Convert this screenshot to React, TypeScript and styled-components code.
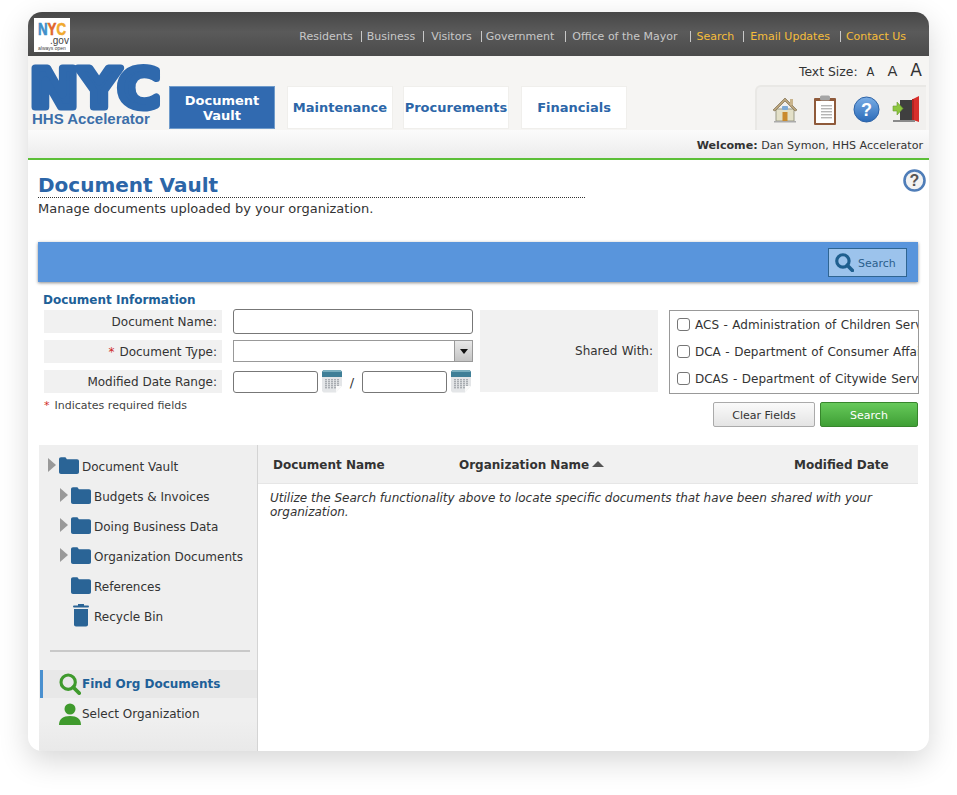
import { styled, createGlobalStyle } from 'styled-components';

const GlobalStyle = createGlobalStyle`
  html, body {
    margin: 0;
    padding: 0;
    background: #fff;
  }
  * {
    box-sizing: border-box;
  }
`;

const Frame = styled.div`
  display: flex;
  flex-direction: column;
  width: 901px;
  height: 739px;
  margin: 12px 28px 44px;
  border-radius: 14px;
  overflow: hidden;
  background: #fff;
  box-shadow: 0 10px 30px rgba(0, 0, 0, 0.16);
  font-family: 'DejaVu Sans', Verdana, sans-serif;
  font-size: 12px;
  color: #333;
`;

const TopBar = styled.header`
  display: flex;
  align-items: center;
  justify-content: space-between;
  height: 44px;
  padding: 6px 23px 4px 6px;
  background: linear-gradient(#474747, #5a5a5a 45%, #4b4b4b);
  flex-shrink: 0;
`;

const GovLogo = styled.div`
  width: 36px;
  height: 34px;
  background: #fff;
`;

const TopLinks = styled.nav`
  display: flex;
  align-items: center;
  padding-top: 2px;
  font-size: 11px;
`;

const TopLink = styled.a<{ $accent?: boolean; $before?: number; $after?: number }>`
  color: ${({ $accent }) => ($accent ? '#f5bd3b' : '#c8c8c8')};
  white-space: nowrap;
  margin-left: ${({ $before }) => $before ?? 0}px;
  padding-left: ${({ $after }) => $after ?? 0}px;
  border-left: ${({ $before }) => ($before ? '1px solid #c8c8c8' : 'none')};
  line-height: 11px;
`;

const Masthead = styled.div`
  display: flex;
  height: 74px;
  background: #f6f5f3;
  flex-shrink: 0;
`;

const BrandLogo = styled.div`
  display: flex;
  flex-direction: column;
  width: 141px;
  flex-shrink: 0;
  padding: 7px 0 0 4px;

  svg {
    overflow: visible;
  }
`;

const BrandName = styled.span`
  font-family: 'Liberation Sans', Arial, sans-serif;
  font-size: 15px;
  line-height: 15px;
  font-weight: 700;
  color: #3b6ea8;
  white-space: nowrap;
`;

const Tab = styled.a<{ $active?: boolean; $left?: number }>`
  display: flex;
  align-items: center;
  justify-content: center;
  width: 106px;
  height: 43px;
  margin: 30px 0 0 ${({ $left }) => $left ?? 0}px;
  background: ${({ $active }) => ($active ? '#316ab0' : '#fff')};
  border: 1px solid ${({ $active }) => ($active ? '#6f9bcb' : '#f0efec')};
  color: ${({ $active }) => ($active ? '#fff' : '#2c66a8')};
  font-size: 13px;
  font-weight: 700;
  line-height: 15px;
  text-align: center;
`;

const MastRight = styled.div`
  display: flex;
  flex-direction: column;
  align-items: flex-end;
  margin-left: auto;
  width: 180px;
`;

const TextSize = styled.div`
  display: flex;
  align-items: baseline;
  height: 29px;
  padding: 7px 7px 0 0;
  color: #333;
  font-size: 12.400px;
  line-height: 15px;
  white-space: nowrap;
`;

const SizeA = styled.span<{ $size: number; $left: number }>`
  font-size: ${({ $size }) => $size}px;
  margin-left: ${({ $left }) => $left}px;
`;

const ToolBox = styled.div`
  display: flex;
  align-items: flex-start;
  width: 171px;
  height: 45px;
  margin-right: 3px;
  padding: 8px 0 0 15px;
  border: 2px solid #e9e8e5;
  border-width: 2px 0 0 2px;
  border-top-left-radius: 6px;
  background: #f1f0ee;
`;

const ToolIcon = styled.svg<{ $left?: number; $top?: number }>`
  flex-shrink: 0;
  margin-left: ${({ $left }) => $left ?? 0}px;
  margin-top: ${({ $top }) => $top ?? 0}px;
`;

const WelcomeBar = styled.div`
  display: flex;
  align-items: center;
  justify-content: flex-end;
  height: 30px;
  padding: 2px 6px 0 0;
  background: linear-gradient(#fbfbfb, #ececec);
  border-bottom: 2px solid #5cbf38;
  font-size: 11.100px;
  color: #333;
  flex-shrink: 0;
`;

const Main = styled.main`
  display: flex;
  flex-direction: column;
  flex: 1;
  min-height: 0;
  padding: 0 10px;
`;

const TitleRow = styled.div`
  display: flex;
  justify-content: space-between;
  height: 82px;
  padding-top: 12px;
`;

const TitleBlock = styled.div`
  width: 547px;
`;

const Title = styled.h1`
  margin: 0;
  height: 26px;
  font-size: 20px;
  line-height: 26px;
  font-weight: 700;
  color: #2c66a8;
  border-bottom: 1px dotted #333;
`;

const Subtitle = styled.p`
  margin: 3px 0 0;
  font-size: 13px;
  line-height: 16px;
  color: #333;
`;

const HelpButton = styled.svg`
  margin: -3px -7px 0 0;
`;

const ActionBar = styled.div`
  display: flex;
  align-items: center;
  justify-content: flex-end;
  width: 880px;
  height: 40px;
  padding-right: 11px;
  background: #5995dc;
  box-shadow: 0 1px 3px rgba(0, 0, 0, 0.45);
  flex-shrink: 0;
`;

const BarSearch = styled.a`
  display: flex;
  align-items: center;
  gap: 3px;
  width: 79px;
  height: 29px;
  padding-left: 6px;
  background: #9cc3ec;
  border: 1px solid #2f6592;
  font-size: 11px;
  color: #2b5f8c;

  span {
    padding-top: 2px;
  }
`;

const SectionTitle = styled.h2`
  margin: 11px 0 3px 5px;
  font-size: 12px;
  line-height: 14px;
  font-weight: 700;
  color: #206098;
`;

const FormGrid = styled.div`
  display: grid;
  grid-template-columns: 436px 178px 261px;
  margin-left: 6px;
`;

const FormRows = styled.div`
  display: grid;
  grid-template-columns: 178px 240px;
  grid-auto-rows: 23px;
  column-gap: 11px;
  row-gap: 7px;
`;

const Label = styled.label`
  display: flex;
  align-items: center;
  justify-content: flex-end;
  padding-right: 5px;
  background: #f1f1f1;
  color: #333;
  font-size: 12px;
  white-space: nowrap;
`;

const Req = styled.span`
  color: #cf2a27;
  margin-right: 5px;
`;

const TextBox = styled.input`
  display: block;
  width: 100%;
  height: 25px;
  margin-top: -1px;
  padding: 0 4px;
  background: #fff;
  border: 1px solid #777;
  border-radius: 3px;
`;

const TypeSelect = styled.div`
  display: flex;
  justify-content: space-between;
  height: 22px;
  border: 1px solid #999;
  background: #fff;
`;

const TypeArrow = styled.span`
  display: flex;
  align-items: center;
  justify-content: center;
  width: 18px;
  background: linear-gradient(#e8e8e8, #c4c4c4);
  border-left: 1px solid #999;

  &::after {
    content: '';
    border: 4px solid transparent;
    border-top: 5px solid #111;
    border-bottom: 0;
  }
`;

const DateRange = styled.div`
  display: flex;
  align-items: center;
  height: 23px;
`;

const DateBox = styled(TextBox)`
  width: 85px;
  height: 22px;
  margin-top: 1px;
`;

const DateSlash = styled.span`
  width: 20px;
  margin-top: 2px;
  font-size: 13px;
  text-align: center;
`;

const CalIcon = styled.svg`
  margin-left: 4px;
  flex-shrink: 0;
`;

const SharedLabel = styled(Label)`
  height: 82px;
  word-spacing: 0.6px;
`;

const SharedList = styled.div`
  width: 250px;
  height: 84px;
  margin-left: 11px;
  border: 1px solid #999;
  overflow: hidden;
`;

const SharedItem = styled.label`
  display: flex;
  align-items: center;
  height: 27px;
  padding-left: 7px;
  white-space: nowrap;
  word-spacing: 0.7px;
  color: #333;
`;

const Check = styled.span`
  flex-shrink: 0;
  width: 13px;
  height: 13px;
  margin-right: 5px;
  background: #fff;
  border: 1px solid #767676;
  border-radius: 3px;
`;

const Note = styled.div`
  margin: 5px 0 0 6px;
  height: 14px;
  font-size: 11px;
  line-height: 14px;
  color: #444;
`;

const ButtonRow = styled.div`
  display: flex;
  justify-content: flex-end;
  gap: 5px;
  width: 880px;
  margin-top: -11px;
  flex-shrink: 0;
`;

const FormButton = styled.a<{ $primary?: boolean }>`
  display: flex;
  align-items: center;
  justify-content: center;
  height: 25px;
  width: ${({ $primary }) => ($primary ? 98 : 102)}px;
  padding-top: 1px;
  font-size: 11px;
  color: ${({ $primary }) => ($primary ? '#fff' : '#333')};
  border: 1px solid ${({ $primary }) => ($primary ? '#37862c' : '#aaa')};
  border-radius: 2px;
  background: ${({ $primary }) =>
    $primary ? 'linear-gradient(#66c95a, #3f9f35)' : 'linear-gradient(#fafafa, #e4e4e4)'};
`;

const Explorer = styled.div`
  display: flex;
  flex: 1;
  min-height: 0;
  width: 879px;
  margin: 18px 0 0 1px;
`;

const Sidebar = styled.aside`
  display: flex;
  flex-direction: column;
  width: 219px;
  flex-shrink: 0;
  padding-top: 7px;
  background: linear-gradient(#efefef 90%, #e9e9e9);
  border-right: 1px solid #d4d4d4;
`;

const TreeRow = styled.div<{ $indent: number }>`
  display: flex;
  align-items: center;
  height: 30px;
  padding-left: ${({ $indent }) => $indent}px;
  color: #333;
  white-space: nowrap;
`;

const Caret = styled.span<{ $hidden?: boolean }>`
  width: 8px;
  height: 14px;
  margin: -4px 3px 0 0;
  flex-shrink: 0;
  visibility: ${({ $hidden }) => ($hidden ? 'hidden' : 'visible')};
  border-left: 8px solid #999;
  border-top: 7px solid transparent;
  border-bottom: 7px solid transparent;
`;

const TreeIcon = styled.svg`
  flex-shrink: 0;
  margin: -4px 3px 0 0;
`;

const Divider = styled.hr`
  width: 200px;
  margin: 18px 0 18px 11px;
  border: 0;
  border-top: 2px solid #c9c9c9;
`;

const SideItem = styled.div<{ $active?: boolean }>`
  display: flex;
  align-items: center;
  height: 28px;
  margin: 0 0 2px 1px;
  padding-left: ${({ $active }) => ($active ? 16 : 19)}px;
  border-left: ${({ $active }) => ($active ? '3px solid #4a90cf' : 'none')};
  background: ${({ $active }) => ($active ? '#e8e8e8' : 'transparent')};
  color: ${({ $active }) => ($active ? '#206098' : '#333')};
  font-weight: ${({ $active }) => ($active ? 700 : 400)};
  white-space: nowrap;
`;

const SideIcon = styled.svg`
  flex-shrink: 0;
  margin-right: 1px;
`;

const Results = styled.section`
  flex: 1;
  min-width: 0;
`;

const TableHead = styled.div`
  display: grid;
  grid-template-columns: 186px 335px auto;
  align-items: center;
  height: 39px;
  padding: 2px 0 0 15px;
  background: #f1f1f1;
  border-bottom: 1px solid #e6e6e6;
  font-weight: 700;
  color: #333;
`;

const SortArrow = styled.span`
  display: inline-block;
  margin-left: 3px;
  vertical-align: 2px;
  border: 6px solid transparent;
  border-bottom: 6px solid #555;
  border-top: 0;
`;

const EmptyText = styled.p`
  margin: 7px 0 0 12px;
  font-size: 12px;
  line-height: 14px;
  font-style: italic;
  color: #333;
`;

const FolderGlyph = () => (
  <TreeIcon width='20' height='17' viewBox='0 0 20 17'>
    <path
      d='M0 2.500C0 1 .8.3 2 .3h3.500c1 0 1.400.5 2 1.400l.4.6H18c1.300 0 2 .7 2 2V15c0 1.200-.7 1.900-2 1.900H2c-1.200 0-2-.7-2-1.900z'
      fill='#2a6496'
    />
  </TreeIcon>
);

const TrashGlyph = () => (
  <TreeIcon width='20' height='23' viewBox='0 0 20 23'>
    <rect x='2' y='1.500' width='16' height='2' rx='1' fill='#2a6496' />
    <rect x='7' y='0' width='6' height='2' fill='#2a6496' />
    <path d='M3 5h14v15.500c0 1.200-.8 2-2 2H5c-1.200 0-2-.8-2-2z' fill='#2a6496' />
  </TreeIcon>
);

const Calendar = () => (
  <CalIcon width='20' height='23' viewBox='0 0 20 23'>
    <path d='M0 2h20v14l-6 6.500H1.500L0 21z' fill='#e4e6e8' />
    <path d='M1.500 0h17L20 1.500V7H0V1.500z' fill='#3f7f97' />
    <rect x='1' y='0' width='18' height='2' fill='#78adbd' />
    <g fill='#a9adb2'>
      {[9, 11, 13, 15, 17].map((y) =>
        [3, 6, 9, 12, 15].map((x) => <rect key={`${x}-${y}`} x={x} y={y} width='2' height='1.400' />),
      )}
    </g>
    <path d='M14 22.500V16h6z' fill='#fafafa' />
  </CalIcon>
);

const SearchGlass = ({ color, size, width = 3 }: { color: string; size: number; width?: number }) => (
  <SideIcon width={size} height={size} viewBox='0 0 24 24'>
    <circle cx='10' cy='10' r='7.800' fill='none' stroke={color} strokeWidth={width} />
    <path d='M15.500 15.500L22 22' stroke={color} strokeWidth={width + 0.6} strokeLinecap='round' />
  </SideIcon>
);

const navLinks = [
  { label: 'Residents' },
  { label: 'Business', before: 8, after: 5 },
  { label: 'Visitors', before: 8, after: 7 },
  { label: 'Government', before: 9, after: 4 },
  { label: 'Office of the Mayor', before: 11, after: 6 },
  { label: 'Search', before: 12, after: 6, accent: true },
  { label: 'Email Updates', before: 9, after: 6, accent: true },
  { label: 'Contact Us', before: 10, after: 5, accent: true },
];

const treeRows = [
  { label: 'Document Vault', indent: 9 },
  { label: 'Budgets & Invoices', indent: 21 },
  { label: 'Doing Business Data', indent: 21 },
  { label: 'Organization Documents', indent: 21 },
  { label: 'References', indent: 21, leaf: true },
  { label: 'Recycle Bin', indent: 21, leaf: true, trash: true },
];

const agencies = [
  'ACS - Administration of Children Services',
  'DCA - Department of Consumer Affairs',
  'DCAS - Department of Citywide Services',
];

const App = () => {
  return (
    <>
      <GlobalStyle />
      <Frame>
        <TopBar>
          <GovLogo>
            <svg width='36' height='34' viewBox='0 0 36 34'>
              <text
                x='4'
                y='17'
                fontFamily='Liberation Sans'
                fontWeight='700'
                fontSize='16'
                stroke='#3d8fc9'
                strokeWidth='.6'
                fill='#3d8fc9'
                textLength='28'
                lengthAdjust='spacingAndGlyphs'
              >
                N
                <tspan fill='#e0662c' stroke='#e0662c'>
                  Y
                </tspan>
                <tspan fill='#f0a92e' stroke='#f0a92e'>
                  C
                </tspan>
              </text>
              <text x='16' y='26' fontFamily='Liberation Sans' fontSize='10' fill='#444'>
                .gov
              </text>
              <text x='4' y='31.500' fontFamily='Liberation Sans' fontSize='5' fill='#444'>
                always open
              </text>
            </svg>
          </GovLogo>
          <TopLinks>
            {navLinks.map((link) => (
              <TopLink key={link.label} $before={link.before} $after={link.after} $accent={link.accent}>
                {link.label}
              </TopLink>
            ))}
          </TopLinks>
        </TopBar>

        <Masthead>
          <BrandLogo>
            <svg width='128' height='48' viewBox='0 0 128 48'>
              <text
                x='-2'
                y='44'
                fontFamily='DejaVu Sans'
                fontWeight='700'
                fontSize='54'
                fill='#2f69ad'
                stroke='#2f69ad'
                strokeWidth='7'
                strokeLinejoin='round'
                textLength='130'
                lengthAdjust='spacingAndGlyphs'
              >
                NYC
              </text>
            </svg>
            <BrandName>HHS Accelerator</BrandName>
          </BrandLogo>
          <Tab $active>
            Document
            <br />
            Vault
          </Tab>
          <Tab $left={12}>Maintenance</Tab>
          <Tab $left={10}>Procurements</Tab>
          <Tab $left={12}>Financials</Tab>
          <MastRight>
            <TextSize>
              Text Size:
              <SizeA $size={11.500} $left={9}>
                A
              </SizeA>
              <SizeA $size={14.500} $left={13}>
                A
              </SizeA>
              <SizeA $size={17} $left={13}>
                A
              </SizeA>
            </TextSize>
            <ToolBox>
              <ToolIcon $top={1} width='26' height='27' viewBox='0 0 26 27'>
                <path d='M4 13h18v12H4z' fill='#e3e0c8' stroke='#9a9a86' />
                <path d='M1 14L13 2l12 12-2 1L13 5 3 15z' fill='#b9a47c' stroke='#8a7a5c' strokeWidth='.8' />
                <rect x='18' y='3' width='3' height='6' fill='#c9b48c' />
                <rect x='10.500' y='16' width='5' height='9' fill='#c98a2e' />
                <rect x='10' y='10' width='6' height='4' rx='1' fill='#7eaad6' />
                <rect x='2' y='25' width='22' height='1.500' fill='#aaa' />
              </ToolIcon>
              <ToolIcon $left={15} width='24' height='31' viewBox='0 0 24 31'>
                <rect x='1' y='3' width='22' height='27' rx='1' fill='#8f5a3a' />
                <rect x='3' y='6' width='18' height='22' fill='#fff' />
                <rect x='7' y='0.500' width='10' height='5' rx='1.500' fill='#a5a5a5' />
                {[10, 13, 16, 19, 22].map((y) => (
                  <rect key={y} x='8' y={y} width='11' height='1.400' fill='#b5b5b5' />
                ))}
              </ToolIcon>
              <ToolIcon $left={16} $top={1} width='27' height='27' viewBox='0 0 27 27'>
                <defs>
                  <linearGradient id='helpFill' x1='0' y1='0' x2='0' y2='1'>
                    <stop offset='0' stopColor='#7aaee6' />
                    <stop offset='1' stopColor='#2a6ab8' />
                  </linearGradient>
                </defs>
                <circle cx='13.500' cy='13.500' r='12.500' fill='url(#helpFill)' stroke='#2d62a5' />
                <text x='13.500' y='20' textAnchor='middle' fontFamily='Liberation Sans' fontWeight='700' fontSize='18' fill='#fff'>
                  ?
                </text>
              </ToolIcon>
              <ToolIcon $left={12} $top={1} width='28' height='27' viewBox='0 0 28 27'>
                <rect x='8' y='4' width='15' height='20' fill='#3f3f3f' />
                <path d='M21 3l6-3v26l-6-2z' fill='#d8302c' />
                <rect x='20' y='3' width='2' height='21' fill='#b52522' />
                <path d='M1 10h4V6l6 6.500-6 6.500v-4H1z' fill='#8dc63f' stroke='#6b9a2f' strokeWidth='.6' />
                <rect x='1' y='24' width='22' height='2' fill='#8a8a8a' />
              </ToolIcon>
            </ToolBox>
          </MastRight>
        </Masthead>

        <WelcomeBar>
          <strong>Welcome:</strong>&nbsp;Dan Symon, HHS Accelerator
        </WelcomeBar>

        <Main>
          <TitleRow>
            <TitleBlock>
              <Title>Document Vault</Title>
              <Subtitle>Manage documents uploaded by your organization.</Subtitle>
            </TitleBlock>
            <HelpButton width='23' height='23' viewBox='0 0 23 23'>
              <circle cx='11.500' cy='11.500' r='10' fill='#f2f2f2' stroke='#4f7db8' strokeWidth='2.600' />
              <text x='11.500' y='17' textAnchor='middle' fontFamily='Liberation Sans' fontWeight='700' fontSize='16' fill='#555'>
                ?
              </text>
            </HelpButton>
          </TitleRow>

          <ActionBar>
            <BarSearch>
              <SearchGlass color='#1f5f8f' size={19} width={4} />
              <span>Search</span>
            </BarSearch>
          </ActionBar>

          <SectionTitle>Document Information</SectionTitle>
          <FormGrid>
            <FormRows>
              <Label>Document Name:</Label>
              <TextBox />
              <Label>
                <Req>*</Req>Document Type:
              </Label>
              <TypeSelect>
                <span />
                <TypeArrow />
              </TypeSelect>
              <Label>Modified Date Range:</Label>
              <DateRange>
                <DateBox />
                <Calendar />
                <DateSlash>/</DateSlash>
                <DateBox />
                <Calendar />
              </DateRange>
            </FormRows>
            <SharedLabel>Shared With:</SharedLabel>
            <SharedList>
              {agencies.map((agency) => (
                <SharedItem key={agency}>
                  <Check />
                  {agency}
                </SharedItem>
              ))}
            </SharedList>
          </FormGrid>
          <Note>
            <Req>*</Req>Indicates required fields
          </Note>
          <ButtonRow>
            <FormButton>Clear Fields</FormButton>
            <FormButton $primary>Search</FormButton>
          </ButtonRow>

          <Explorer>
            <Sidebar>
              {treeRows.map((row) => (
                <TreeRow key={row.label} $indent={row.indent}>
                  <Caret $hidden={row.leaf} />
                  {row.trash ? <TrashGlyph /> : <FolderGlyph />}
                  {row.label}
                </TreeRow>
              ))}
              <Divider />
              <SideItem $active>
                <SearchGlass color='#3f9a2d' size={22} width={3.400} />
                Find Org Documents
              </SideItem>
              <SideItem>
                <SideIcon width='22' height='22' viewBox='0 0 22 22'>
                  <circle cx='11' cy='6' r='5.500' fill='#3f9a2d' />
                  <path d='M0 22c0-6 4-9 11-9s11 3 11 9z' fill='#3f9a2d' />
                </SideIcon>
                Select Organization
              </SideItem>
            </Sidebar>
            <Results>
              <TableHead>
                <span>Document Name</span>
                <span>
                  Organization Name
                  <SortArrow />
                </span>
                <span>Modified Date</span>
              </TableHead>
              <EmptyText>
                Utilize the Search functionality above to locate specific documents that have been shared with your
                organization.
              </EmptyText>
            </Results>
          </Explorer>
        </Main>
      </Frame>
    </>
  );
};

export default App;
